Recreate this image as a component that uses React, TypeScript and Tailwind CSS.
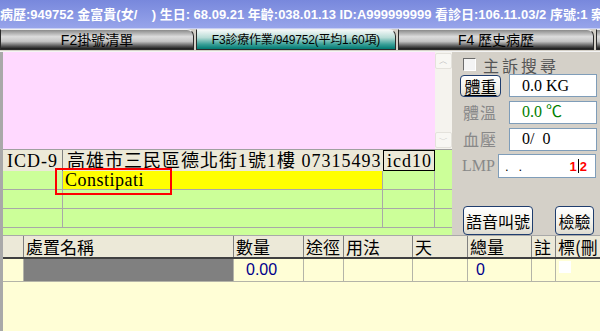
import type { ReactNode } from 'react'

const cjk = "font-['Noto_Sans_CJK_TC',sans-serif]"
const serif = "font-['Liberation_Serif','Noto_Sans_CJK_TC',serif]"
const sans = "font-['Liberation_Sans','Noto_Sans_CJK_TC',sans-serif]"

const tabOff =
  'bg-[linear-gradient(to_bottom,#8a8a8a_0%,#dcdcdc_35%,#c4c4c4_60%,#555_85%,#1a1a1a_100%)]'
const tabOn = 'bg-[linear-gradient(to_bottom,#f4f8f8_0%,#b8dcd6_40%,#3aa098_75%,#007a72_100%)]'

function Tab({ label, active, w, size }: { label: string; active?: boolean; w: string; size: string }) {
  return (
    <div
      className={`${w} ${size} ${active ? tabOn : tabOff} relative flex h-[21px] shrink-0 items-center justify-center overflow-hidden whitespace-nowrap rounded-tr-[7px] border border-[#2a2a2a] border-t-[#f0f0f0] leading-none text-black ${sans}`}
    >
      {label}
    </div>
  )
}

function Btn({ children, cls }: { children: ReactNode; cls: string }) {
  return (
    <div
      className={`${cls} flex items-center justify-center rounded-[4px] border border-[#1f3d6e] bg-[linear-gradient(to_bottom,#ffffff,#f2f1ea_60%,#dedbd0)] text-black ${cjk}`}
    >
      {children}
    </div>
  )
}

function Box({ children, cls }: { children: ReactNode; cls?: string }) {
  return (
    <div className={`flex h-[23px] w-[88px] items-center border border-[#7f9db9] bg-white pl-[12px] text-[16px] ${serif} ${cls ?? ''}`}>
      {children}
    </div>
  )
}

const bottomCols = [
  { w: 'w-[21px]', label: '', v: '' },
  { w: 'w-[210px]', label: '處置名稱', v: 'gray' },
  { w: 'w-[70px]', label: '數量', v: '0.00' },
  { w: 'w-[40px]', label: '途徑', v: '' },
  { w: 'w-[69px]', label: '用法', v: '' },
  { w: 'w-[55px]', label: '天', v: '' },
  { w: 'w-[64px]', label: '總量', v: '0' },
  { w: 'w-[24px]', label: '註', v: '' },
  { w: 'w-[50px]', label: '標(刪', v: 'chk' },
]

export default function App() {
  return (
    <div className="relative h-[331px] w-[600px] overflow-hidden bg-[#d4d0c8]">
      {/* patient header */}
      <div
        className={`flex h-[29px] items-center overflow-hidden whitespace-nowrap border-b border-[#c8cff4] bg-gradient-to-b from-[#7888dc] to-[#97a4ea] pt-[1px] text-[13px] font-bold text-white ${sans}`}
      >
        病歷:949752 金富貴(女/&nbsp;&nbsp;&nbsp;&nbsp;) 生日: 68.09.21 年齡:038.01.13 ID:A999999999 看診日:106.11.03/2 序號:1 案
      </div>

      {/* tabs */}
      <div className="flex h-[23px] items-end gap-[2px] border-b border-[#f4f4f4] pb-[1px]">
        <Tab label="F2掛號清單" w="w-[194px]" size="text-[14px]" />
        <Tab label="F3診療作業/949752(平均1.60項)" w="w-[200px]" size="text-[12px] tracking-[-0.2px]" active />
        <Tab label="F4 歷史病歷" w="w-[196px]" size="text-[14px]" />
        <Tab label="" w="w-[10px]" size="text-[14px]" />
      </div>

      <div className="flex h-[183px]">
        {/* left: complaint + diagnosis grid */}
        <div className="flex w-[452px] flex-col border-l-[3px] border-[#a9a9a9] bg-[#ccff99]">
          <div className="flex h-[98px] border-b border-[#a0a0a0] bg-[#ffd9ff]">
            <div className="flex-1" />
            <div className="flex w-[17px] flex-col justify-between bg-[#f5f3ee] py-[1px]">
              <div className="flex h-[16px] items-center justify-center rounded-[2px] border border-[#e4e2dc] bg-[#f8f7f3] text-[9px] text-[#b8b8b8]">︿</div>
              <div className="flex h-[16px] items-center justify-center rounded-[2px] border border-[#e4e2dc] bg-[#f8f7f3] text-[9px] text-[#b8b8b8]">﹀</div>
            </div>
          </div>
          <div className={`flex h-[21px] ${serif} text-[18px] leading-none text-black`}>
            <div className="flex w-[60px] items-center border-r border-[#808080] bg-[#ece9d8] pl-[4px] tracking-[1px]">ICD-9</div>
            <div className="flex w-[320px] items-center overflow-hidden whitespace-nowrap bg-[#ece9d8] pl-[4px] tracking-[1px]">
              高雄市三民區德北街1號1樓 07315493
            </div>
            <div className="flex w-[52px] items-center border border-black bg-[#ece9d8] pl-[3px] tracking-[1px]">icd10</div>
          </div>
          {[0, 1, 2].map((r) => (
            <div key={r} className="flex h-[19px] border-b border-[#a8a8a8]">
              <div className="w-[60px] border-r border-[#a8a8a8]" />
              <div className={`flex w-[320px] items-center border-r border-[#a8a8a8] ${r === 0 ? 'bg-[#ffff00]' : ''}`}>
                {r === 0 && <span className={`pl-[2px] text-[18px] leading-none tracking-[0.5px] text-black ${serif}`}>Constipati</span>}
              </div>
              <div className="w-[52px] border-r border-[#a8a8a8]" />
            </div>
          ))}
        </div>

        {/* right: vitals */}
        <div className="flex flex-1 flex-col pl-[8px] pt-[4px]">
          <div className="flex h-[17px] items-center gap-[7px] pl-[3px]">
            <div className="h-[13px] w-[13px] border border-[#6b6b6b] border-b-white border-r-white bg-[#f4f4f4]" />
            <span className={`text-[16px] leading-none tracking-[3px] text-[#555] ${cjk}`}>主訴搜尋</span>
          </div>
          <div className="mt-[1px] flex items-center gap-[8px]">
            <Btn cls="h-[22px] w-[41px] text-[16px] underline underline-offset-2">體重</Btn>
            <Box>0.0 KG</Box>
          </div>
          <div className="mt-[3px] flex items-center gap-[8px]">
            <span className={`w-[41px] pl-[3px] text-[16px] tracking-[1px] text-[#888] ${cjk}`}>體溫</span>
            <Box cls="text-[#008000]">0.0 ℃</Box>
          </div>
          <div className="mt-[3px] flex items-center gap-[8px]">
            <span className={`w-[41px] pl-[3px] text-[16px] tracking-[1px] text-[#888] ${cjk}`}>血壓</span>
            <Box>0/&nbsp;&nbsp;0</Box>
          </div>
          <div className="mt-[3px] flex items-center gap-[5px]">
            <span className={`w-[33px] pl-[2px] text-[16px] text-[#888] ${serif}`}>LMP</span>
            <div className={`flex h-[24px] w-[98px] items-center border border-[#7f9db9] bg-white pl-[6px] pr-[8px] ${sans}`}>
              <span className="text-[13px] leading-none tracking-[10px] text-black">..</span>
              <span className="ml-auto flex items-center text-[13px] font-bold leading-none text-[#ff0000]">
                1<span className="mx-[1px] h-[14px] w-[1px] bg-black" />2
              </span>
            </div>
          </div>
          <div className="mt-[28px] flex items-center">
            <Btn cls="ml-[3px] h-[29px] w-[70px] text-[16px]">語音叫號</Btn>
            <Btn cls="ml-[22px] h-[29px] w-[39px] text-[16px]">檢驗</Btn>
          </div>
        </div>
      </div>

      {/* order grid */}
      <div className="h-[96px] border-l-[3px] border-t border-[#a9a9a9] bg-[#fffed6]">
        <div className={`flex h-[23px] border-b-2 border-[#404040] bg-[#ece9d8] text-[17px] leading-[21px] text-black ${cjk}`}>
          {bottomCols.map((c, i) => (
            <div key={i} className={`${c.w} flex shrink-0 items-center whitespace-nowrap border-r border-[#808080] pl-[2px]`}>
              {c.label}
            </div>
          ))}
        </div>
        <div className={`flex h-[23px] border-b border-[#b4b4a8] ${sans}`}>
          {bottomCols.map((c, i) => (
            <div key={i} className={`${c.w} flex shrink-0 items-center border-r border-[#b4b4a8]`}>
              {c.v === 'gray' && <div className="h-full w-full bg-[#808080]" />}
              {c.v === '0.00' && <span className="pl-[12px] text-[16px] text-[#00008b]">0.00</span>}
              {c.v === '0' && <span className="pl-[8px] text-[16px] text-[#00008b]">0</span>}
              {c.v === 'chk' && <div className="mb-[6px] ml-[3px] h-[12px] w-[12px] bg-white" />}
            </div>
          ))}
        </div>
      </div>

      {/* selection marker */}
      <div className="absolute left-[55px] top-[168px] h-[27px] w-[117px] border-2 border-[#ff0000]" />
    </div>
  )
}
